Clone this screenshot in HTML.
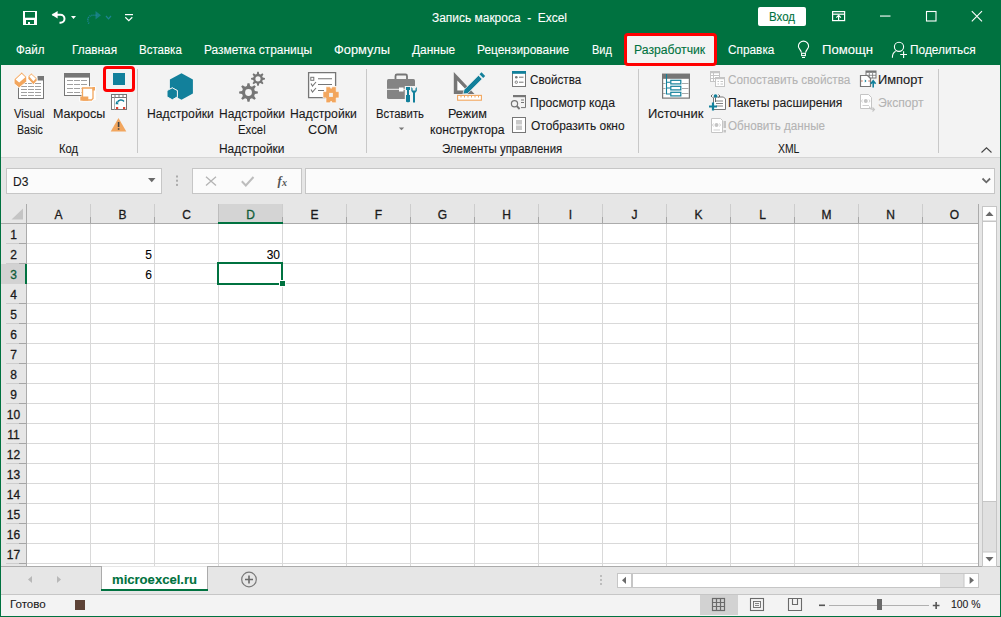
<!DOCTYPE html>
<html><head><meta charset="utf-8"><style>
html,body{margin:0;padding:0;width:1001px;height:617px;overflow:hidden;background:#fff}
body{position:relative;font-family:"Liberation Sans",sans-serif}
.t{position:absolute;white-space:pre;line-height:1;transform-origin:0 0;-webkit-text-stroke:0.1px currentColor}
.h{-webkit-text-stroke:0.3px currentColor}
</style></head><body>
<div style="position:absolute;left:0px;top:0px;width:1001px;height:65px;background:#007240"></div>
<div style="position:absolute;left:1px;top:65px;width:999px;height:92px;background:#F3F3F3"></div>
<div style="position:absolute;left:1px;top:157px;width:999px;height:1px;background:#D5D5D5"></div>
<div style="position:absolute;left:1px;top:158px;width:999px;height:408px;background:#E6E6E6"></div>
<div style="position:absolute;left:0px;top:0px;width:1px;height:617px;background:#007240"></div>
<div style="position:absolute;left:1000px;top:0px;width:1px;height:617px;background:#007240"></div>
<div style="position:absolute;left:758px;top:7px;width:48px;height:19px;background:#FFFFFF;border-radius:2px"></div>
<div style="position:absolute;left:624px;top:33px;width:93px;height:33px;border:3px solid #FF0000;border-radius:4px;box-sizing:border-box;background:#F3F3F3"></div>
<div style="position:absolute;left:137px;top:69px;width:1px;height:84px;background:#C8C8C8"></div>
<div style="position:absolute;left:366px;top:69px;width:1px;height:84px;background:#C8C8C8"></div>
<div style="position:absolute;left:638px;top:69px;width:1px;height:84px;background:#C8C8C8"></div>
<div style="position:absolute;left:938px;top:69px;width:1px;height:84px;background:#C8C8C8"></div>
<div style="position:absolute;left:103px;top:66px;width:32px;height:26px;border:3px solid #FF0000;border-radius:4px;box-sizing:border-box"></div>
<div style="position:absolute;left:113px;top:73px;width:12px;height:12px;background:#13809B"></div>
<svg style="position:absolute;left:0;top:0" width="1001" height="617" viewBox="0 0 1001 617"><rect x="23" y="11" width="14" height="14" fill="#FFFFFF"/>
<rect x="25" y="12" width="10" height="5.7" fill="#007240"/>
<rect x="26" y="20" width="8" height="4" fill="#007240"/>
<rect x="28" y="22" width="2" height="2" fill="#FFFFFF"/>
<path d="M52.5 14.8 H60.5 A4 4 0 0 1 60.5 22.8 H59.5" fill="none" stroke="#FFFFFF" stroke-width="2"/>
<path d="M51.6 14.8 L57.6 11 L57.6 18.6 Z" fill="#FFFFFF"/>
<path d="M71 16 H76 L73.5 19 Z" fill="#FFFFFF"/>
<path d="M89 23.5 C86.5 19.5 88 15.8 92.5 15.3 H97" fill="none" stroke="#2A8CB5" stroke-width="1.6" stroke-dasharray="1 1" opacity="0.75"/>
<path d="M101 15.3 L95.5 11 L95.5 19.6 Z" fill="#2A8CB5" opacity="0.55"/>
<path d="M106 16 L108.5 18.8 L111 16" fill="none" stroke="#2A8CB5" stroke-width="1.2" opacity="0.7"/>
<rect x="125" y="14" width="8" height="1.2" fill="#FFFFFF"/>
<path d="M125.3 17.3 L128.8 20.6 L132.3 17.3" fill="none" stroke="#FFFFFF" stroke-width="1.2"/>
<rect x="832.6" y="11.6" width="12" height="9" fill="none" stroke="#FFFFFF" stroke-width="1.2"/>
<rect x="833" y="13.6" width="11" height="1.2" fill="#FFFFFF"/>
<rect x="838" y="15.5" width="1.2" height="5.5" fill="#FFFFFF"/>
<path d="M836.3 17.6 L838.6 15.3 L840.9 17.6" fill="none" stroke="#FFFFFF" stroke-width="1.1"/>
<rect x="880" y="15.5" width="10.5" height="1.1" fill="#FFFFFF"/>
<rect x="926.5" y="11.5" width="9.5" height="9.5" fill="none" stroke="#FFFFFF" stroke-width="1.1"/>
<path d="M971.8 11.2 L982 21.4 M982 11.2 L971.8 21.4" stroke="#FFFFFF" stroke-width="1.1"/>
<path d="M801.4 52.6 C801 50 798.4 48.6 798.4 46.2 A5.1 5.1 0 0 1 808.6 46.2 C808.6 48.6 806 50 805.6 52.6" fill="none" stroke="#FFFFFF" stroke-width="1.1"/>
<rect x="801.6" y="53.3" width="3.8" height="2.3" fill="none" stroke="#FFFFFF" stroke-width="1.1"/>
<rect x="802" y="57" width="3" height="1" fill="#FFFFFF"/>
<circle cx="899" cy="46.8" r="4.6" fill="none" stroke="#FFFFFF" stroke-width="1.1"/>
<path d="M895.6 51.2 C893.5 52.3 892.3 54.8 892.4 57.8" fill="none" stroke="#FFFFFF" stroke-width="1.1"/>
<path d="M900.2 54.5 H907 M903.6 51.2 V58" stroke="#FFFFFF" stroke-width="1.1"/>
<rect x="18.5" y="76.5" width="25" height="22" fill="#FFFFFF" stroke="#767676" stroke-width="1"/>
<rect x="37.5" y="76.5" width="6" height="4" fill="#767676"/>
<rect x="21" y="83.0" width="6" height="1" fill="#A0A0A0"/>
<rect x="28" y="83.0" width="6" height="1" fill="#A0A0A0"/>
<rect x="35" y="83.0" width="6" height="1" fill="#A0A0A0"/>
<rect x="21" y="86.0" width="6" height="1" fill="#A0A0A0"/>
<rect x="28" y="86.0" width="6" height="1" fill="#A0A0A0"/>
<rect x="35" y="86.0" width="6" height="1" fill="#A0A0A0"/>
<rect x="21" y="89.0" width="6" height="1" fill="#A0A0A0"/>
<rect x="28" y="89.0" width="6" height="1" fill="#A0A0A0"/>
<rect x="35" y="89.0" width="6" height="1" fill="#A0A0A0"/>
<rect x="21" y="92.0" width="6" height="1" fill="#A0A0A0"/>
<rect x="28" y="92.0" width="6" height="1" fill="#A0A0A0"/>
<rect x="35" y="92.0" width="6" height="1" fill="#A0A0A0"/>
<rect x="21" y="95.0" width="6" height="1" fill="#A0A0A0"/>
<rect x="28" y="95.0" width="6" height="1" fill="#A0A0A0"/>
<rect x="35" y="95.0" width="6" height="1" fill="#A0A0A0"/>
<path d="M18.5 76.5 H37.5" stroke="#FFFFFF" stroke-width="1.2"/>
<path d="M14.1 79.2 L21.7 72.1 L26.7 77 V81.6 L19.1 87.8 L14.1 83.6 Z" fill="#F2A65E" stroke="#FFFFFF" stroke-width="0.8"/>
<path d="M15.6 79.4 L21.7 73.7 L25.4 77.3 L19.2 82.4 Z" fill="#FFFFFF"/>
<path d="M28 76.3 L31.4 73.1 L37 78.3 V80.7 L33.4 84.7 L28 78.9 Z" fill="#F2A65E" stroke="#FFFFFF" stroke-width="0.8"/>
<path d="M29.3 76.6 L31.4 74.6 L35.8 78.5 L33.4 81.3 Z" fill="#FFFFFF"/>
<rect x="64.5" y="73.5" width="25" height="22" fill="#FFFFFF" stroke="#767676" stroke-width="1"/>
<rect x="64" y="73" width="26" height="4.6" fill="#767676"/>
<rect x="67" y="80.0" width="6" height="1" fill="#A0A0A0"/>
<rect x="74" y="80.0" width="6" height="1" fill="#A0A0A0"/>
<rect x="81" y="80.0" width="6" height="1" fill="#A0A0A0"/>
<rect x="67" y="84.0" width="6" height="1" fill="#A0A0A0"/>
<rect x="74" y="84.0" width="6" height="1" fill="#A0A0A0"/>
<rect x="81" y="84.0" width="6" height="1" fill="#A0A0A0"/>
<rect x="67" y="88.0" width="6" height="1" fill="#A0A0A0"/>
<rect x="74" y="88.0" width="6" height="1" fill="#A0A0A0"/>
<rect x="81" y="88.0" width="6" height="1" fill="#A0A0A0"/>
<rect x="67" y="92.0" width="6" height="1" fill="#A0A0A0"/>
<rect x="74" y="92.0" width="6" height="1" fill="#A0A0A0"/>
<rect x="81" y="92.0" width="6" height="1" fill="#A0A0A0"/>
<path d="M81.5 86.3 H95.8 V100 H93 V101.6 H79.3 V97 H81.5 Z" fill="#FFFFFF"/>
<path d="M82.5 99.5 V88 H93 V98.5 L91.5 100 H82.5" fill="none" stroke="#F2A65E" stroke-width="1.3"/>
<rect x="80.3" y="96.5" width="8" height="4.2" fill="#F2A65E"/>
<rect x="92.5" y="87" width="2.5" height="3.5" fill="#F2A65E"/>
<rect x="111.5" y="94.5" width="15" height="15" fill="#FFFFFF" stroke="#767676" stroke-width="1"/>
<path d="M111.5 97.5 H126.5 M119 94.5 V97.5 M123 94.5 V97.5 M115 94.5 V97.5" stroke="#767676" stroke-width="1"/>
<path d="M114.5 97.5 V109.5" stroke="#B0B0B0" stroke-width="1"/>
<path d="M117.5 102.5 A3.5 3 0 0 1 124 101.5" fill="none" stroke="#12809B" stroke-width="1.4"/>
<path d="M116.2 101 L118.8 104.2 L115.6 104.2 Z" fill="#12809B"/>
<rect x="116" y="107" width="2.2" height="2.2" fill="#E04030"/><rect x="123" y="107" width="2.2" height="2.2" fill="#E04030"/>
<path d="M118.5 118 L126.3 131.6 H110.7 Z" fill="#F2A65E"/>
<rect x="117.8" y="122" width="1.6" height="5" fill="#444"/><rect x="117.8" y="128.2" width="1.6" height="1.6" fill="#444"/>
<path d="M181.5 73.2 L192.9 79.5 V93.5 L181.5 99.8 L177.8 97.8 V90.5 L172.3 87.5 L169.9 88.7 V79.5 Z" fill="#12809B"/>
<path d="M172.3 87.8 L177.4 90.6 V96.8 L172.3 99.8 L167 96.8 V90.6 Z" fill="#12809B" stroke="#F3F3F3" stroke-width="1"/>
<path d="M254.90 90.90 L257.85 91.49 L257.85 93.51 L254.90 94.10 L254.16 95.89 L255.82 98.39 L254.39 99.82 L251.89 98.16 L250.10 98.90 L249.51 101.85 L247.49 101.85 L246.90 98.90 L245.11 98.16 L242.61 99.82 L241.18 98.39 L242.84 95.89 L242.10 94.10 L239.15 93.51 L239.15 91.49 L242.10 90.90 L242.84 89.11 L241.18 86.61 L242.61 85.18 L245.11 86.84 L246.90 86.10 L247.49 83.15 L249.51 83.15 L250.10 86.10 L251.89 86.84 L254.39 85.18 L255.82 86.61 L254.16 89.11 Z M251.9 92.5 A3.4 3.4 0 1 0 245.1 92.5 A3.4 3.4 0 1 0 251.9 92.5 Z" fill="#767676" fill-rule="evenodd"/>
<path d="M262.75 77.61 L264.96 78.05 L264.96 79.55 L262.75 79.99 L262.20 81.32 L263.45 83.19 L262.39 84.25 L260.52 83.00 L259.19 83.55 L258.75 85.76 L257.25 85.76 L256.81 83.55 L255.48 83.00 L253.61 84.25 L252.55 83.19 L253.80 81.32 L253.25 79.99 L251.04 79.55 L251.04 78.05 L253.25 77.61 L253.80 76.28 L252.55 74.41 L253.61 73.35 L255.48 74.60 L256.81 74.05 L257.25 71.84 L258.75 71.84 L259.19 74.05 L260.52 74.60 L262.39 73.35 L263.45 74.41 L262.20 76.28 Z M260.6 78.8 A2.6 2.6 0 1 0 255.4 78.8 A2.6 2.6 0 1 0 260.6 78.8 Z" fill="#767676" fill-rule="evenodd"/>
<path d="M327 97.6 H308.6 V72.6 H335.6 V86" fill="#FFFFFF" stroke="#767676" stroke-width="1.3"/>
<rect x="310.8" y="77.3" width="3" height="3" fill="none" stroke="#767676" stroke-width="1"/>
<path d="M318 78.8 H332 M318 84.5 H332 M318 90.5 H324" stroke="#767676" stroke-width="1.1"/>
<path d="M311 83.5 L312.5 86 L316 82 M311 89.5 L312.5 92 L316 88" fill="none" stroke="#767676" stroke-width="1.1"/>
<path d="M326 86.8 H330 L331.1 88.6 L332.2 86.8 H336.2 V91.6 H339 V97.9 H336.2 V102.8 H332.2 L331.1 101 L330 102.8 H326 V97.9 H323 V91.6 H326 Z" fill="#F2A65E" stroke="#FFFFFF" stroke-width="0.6"/>
<rect x="329.1" y="92.9" width="3.8" height="4" fill="#F3F3F3"/>
<rect x="395.5" y="74.5" width="11.5" height="6" rx="1.5" fill="none" stroke="#767676" stroke-width="1.8"/>
<rect x="387" y="79" width="28" height="20" rx="1.5" fill="#848484"/>
<rect x="387" y="88.8" width="28" height="1" fill="#F3F3F3"/>
<rect x="399" y="87.5" width="4.5" height="4" fill="#FFFFFF"/>
<path d="M404.8 86 H411 V103 H404.8 Z M410.5 86 H418 V103 H410.5 Z" fill="#F3F3F3"/>
<path d="M406 87 H410 V90 H409 V95 H410 V101.5 C410 102.5 406 102.5 406 101.5 V95 H407 V90 H406 Z" fill="#12809B"/>
<path d="M411.3 87 V91 L413 93 V102.5 H415 V93 L416.8 91 V87 L415.5 88.5 V90.5 H412.6 V88.5 Z" fill="#12809B"/>
<path d="M457.3 80.5 V90.5 H466.8 Z" fill="#FFFFFF"/>
<path d="M453.8 72 L474.5 93.9 H453.8 Z M457.3 80.5 V90.5 H466.8 Z" fill="#767676" fill-rule="evenodd"/>
<path d="M463 94 L464 89.8 L478.5 75.3 L482.2 79 L467.7 93.5 Z" fill="#12809B" stroke="#F3F3F3" stroke-width="0.8"/>
<path d="M479.5 74.3 L481.5 72.3 L485.2 76 L483.2 78 Z" fill="#12809B"/>
<rect x="457.6" y="95.4" width="23.8" height="4.8" fill="#FFFFFF" stroke="#F2A65E" stroke-width="1.1"/>
<path d="M461 95.5 V97.5 M464.5 95.5 V97.5 M468 95.5 V97.5 M471.5 95.5 V97.5 M475 95.5 V97.5 M478.5 95.5 V97.5" stroke="#F2A65E" stroke-width="1"/>
<rect x="512.5" y="71.5" width="13" height="15" fill="#FFFFFF" stroke="#767676" stroke-width="1"/>
<rect x="512" y="71" width="14" height="2.8" fill="#12809B"/>
<circle cx="516.3" cy="77.2" r="1.3" fill="#767676"/><circle cx="516.3" cy="82.2" r="1.2" fill="none" stroke="#767676" stroke-width="0.9"/>
<path d="M519 77.2 H523.5 M519 82.2 H523.5" stroke="#767676" stroke-width="1"/>
<rect x="513" y="95" width="13" height="2.2" fill="#767676"/>
<path d="M525.5 97 V107.6 H521" fill="none" stroke="#767676" stroke-width="1"/>
<path d="M521 100 H524 M521 102.5 H524" stroke="#767676" stroke-width="1"/>
<circle cx="514.5" cy="103.8" r="3.1" fill="#F3F3F3" stroke="#767676" stroke-width="1.2"/>
<path d="M516.7 106 L519.6 109" stroke="#767676" stroke-width="1.8"/>
<rect x="512.5" y="117.5" width="13" height="15" fill="#FFFFFF" stroke="#767676" stroke-width="1"/>
<rect x="516" y="120" width="6" height="10" fill="#C9C9C9"/>
<rect x="516" y="124.5" width="6" height="1" fill="#FFFFFF"/>
<rect x="662.6" y="74.3" width="26.8" height="23.8" fill="#FFFFFF" stroke="#767676" stroke-width="1.2"/>
<rect x="662" y="73.8" width="28" height="5" fill="#767676"/>
<rect x="663" y="83.0" width="2.5" height="1" fill="#A8A8A8"/><rect x="682" y="83.0" width="6.5" height="1" fill="#A8A8A8"/>
<rect x="663" y="88.0" width="2.5" height="1" fill="#A8A8A8"/><rect x="682" y="88.0" width="6.5" height="1" fill="#A8A8A8"/>
<rect x="663" y="93.0" width="2.5" height="1" fill="#A8A8A8"/><rect x="682" y="93.0" width="6.5" height="1" fill="#A8A8A8"/>
<path d="M666.5 74 V94 H670.5 M666.5 82.2 H670.5 M666.5 88 H670.5" fill="none" stroke="#12809B" stroke-width="1.1"/>
<rect x="670.8" y="80.3" width="10" height="3.6" fill="#FFFFFF" stroke="#12809B" stroke-width="1.2"/>
<rect x="670.8" y="86.3" width="10" height="3.6" fill="#FFFFFF" stroke="#12809B" stroke-width="1.2"/>
<rect x="670.8" y="92.3" width="10" height="3.6" fill="#FFFFFF" stroke="#12809B" stroke-width="1.2"/>
<rect x="710.5" y="71.5" width="9" height="10" fill="#FFFFFF" stroke="#C5C5C5" stroke-width="1"/>
<rect x="710" y="71" width="10" height="2.3" fill="#C5C5C5"/>
<path d="M710.5 75.5 H719.5 M710.5 78.5 H715 M713.5 73 V81.5" stroke="#C5C5C5" stroke-width="1"/>
<rect x="715.5" y="77.5" width="9" height="9" fill="#FFFFFF" stroke="#C5C5C5" stroke-width="1"/>
<rect x="715" y="77" width="10" height="2.2" fill="#C5C5C5"/>
<path d="M717.5 81.5 H719 M720.5 81.5 H723 M717.5 84 H719 M720.5 84 H723" stroke="#C5C5C5" stroke-width="1"/>
<path d="M713.5 97.5 V109.5 H725.5 V99 L723.5 97 H713.5" fill="#FFFFFF" stroke="#767676" stroke-width="1"/>
<path d="M716 101 H723 M716 103.5 H723 M716 106 H723" stroke="#767676" stroke-width="0.9"/>
<circle cx="715.5" cy="96" r="1.8" fill="#12809B"/>
<path d="M712.5 94.5 L711 96 L712.5 97.5 M718.5 94.5 L720 96 L718.5 97.5" fill="none" stroke="#444" stroke-width="0.8"/>
<path d="M715.5 98 V102" stroke="#444" stroke-width="0.8"/>
<path d="M709 106.5 H717 M713 102.5 V110.5" stroke="#12809B" stroke-width="2.2"/>
<path d="M711.5 118.5 V132.5 H722.5 V120.5 L720.5 118.5 Z" fill="#FFFFFF" stroke="#C5C5C5" stroke-width="1"/>
<circle cx="716.5" cy="125" r="2" fill="#C5C5C5"/>
<path d="M713.5 123.5 L712.5 125 L713.5 126.5 M719.5 123.5 L720.5 125 L719.5 126.5 M713.5 130 H720" fill="none" stroke="#C5C5C5" stroke-width="0.8"/>
<rect x="723.5" y="121" width="2.5" height="7" fill="#C5C5C5"/><rect x="723.5" y="130" width="2.5" height="2.5" fill="#C5C5C5"/>
<rect x="866" y="71" width="10" height="7" fill="#FFFFFF" stroke="#767676" stroke-width="1"/>
<rect x="866" y="71" width="10" height="1.8" fill="#767676"/>
<path d="M869.3 73 V78 M872.6 73 V78 M866 75.3 H876" stroke="#767676" stroke-width="0.8"/>
<path d="M860.5 75.5 V86.5 H870.5 V78.5 L867.5 75.5 Z" fill="#FFFFFF" stroke="#767676" stroke-width="1.2"/>
<path d="M862.2 80.2 L861.5 81 L862.2 81.8 M868.8 80.2 L869.5 81 L868.8 81.8" fill="none" stroke="#B04020" stroke-width="0.8"/>
<path d="M864.8 79.5 V82.5 L866.5 81 Z" fill="#12809B"/>
<path d="M873.2 87.5 V81.5 M870.8 83.8 L873.2 80.8 L875.6 83.8" fill="none" stroke="#12809B" stroke-width="1.6"/>
<path d="M860.5 94.5 V108.5 H871.5 V97.5 L868.5 94.5 Z" fill="#FFFFFF" stroke="#C5C5C5" stroke-width="1"/>
<circle cx="865.8" cy="101" r="2" fill="#C5C5C5"/>
<path d="M862.5 99.5 L861.5 101 L862.5 102.5 M869 99.5 L870 101 L869 102.5 M862.5 105.5 H869" fill="none" stroke="#C5C5C5" stroke-width="0.8"/>
<path d="M869.5 106.5 C869.5 109 871 109.5 874 109.5 M872.5 107.5 L874.5 109.5 L872.5 111.5" fill="none" stroke="#C5C5C5" stroke-width="1.1"/>
<path d="M981.5 152.5 L986.5 147.8 L991.5 152.5" fill="none" stroke="#444" stroke-width="1.1"/></svg>
<div style="position:absolute;left:6px;top:168px;width:156px;height:26px;background:#FBFBFB;border:1px solid #C6C6C6;box-sizing:border-box"></div>
<div style="position:absolute;left:192px;top:168px;width:110px;height:26px;background:#FBFBFB;border:1px solid #C6C6C6;box-sizing:border-box"></div>
<div style="position:absolute;left:305px;top:168px;width:690px;height:26px;background:#FBFBFB;border:1px solid #C6C6C6;box-sizing:border-box"></div>
<div style="position:absolute;left:1px;top:204px;width:977px;height:20px;background:#E6E6E6"></div>
<div style="position:absolute;left:1px;top:224px;width:25px;height:342px;background:#E6E6E6"></div>
<div style="position:absolute;left:27px;top:224px;width:951px;height:342px;background:#FFFFFF"></div>
<div style="position:absolute;left:90px;top:224px;width:1px;height:342px;background:#D9D9D9"></div>
<div style="position:absolute;left:154px;top:224px;width:1px;height:342px;background:#D9D9D9"></div>
<div style="position:absolute;left:218px;top:224px;width:1px;height:342px;background:#D9D9D9"></div>
<div style="position:absolute;left:282px;top:224px;width:1px;height:342px;background:#D9D9D9"></div>
<div style="position:absolute;left:346px;top:224px;width:1px;height:342px;background:#D9D9D9"></div>
<div style="position:absolute;left:410px;top:224px;width:1px;height:342px;background:#D9D9D9"></div>
<div style="position:absolute;left:474px;top:224px;width:1px;height:342px;background:#D9D9D9"></div>
<div style="position:absolute;left:538px;top:224px;width:1px;height:342px;background:#D9D9D9"></div>
<div style="position:absolute;left:602px;top:224px;width:1px;height:342px;background:#D9D9D9"></div>
<div style="position:absolute;left:666px;top:224px;width:1px;height:342px;background:#D9D9D9"></div>
<div style="position:absolute;left:730px;top:224px;width:1px;height:342px;background:#D9D9D9"></div>
<div style="position:absolute;left:794px;top:224px;width:1px;height:342px;background:#D9D9D9"></div>
<div style="position:absolute;left:858px;top:224px;width:1px;height:342px;background:#D9D9D9"></div>
<div style="position:absolute;left:922px;top:224px;width:1px;height:342px;background:#D9D9D9"></div>
<div style="position:absolute;left:27px;top:243px;width:951px;height:1px;background:#D9D9D9"></div>
<div style="position:absolute;left:27px;top:263px;width:951px;height:1px;background:#D9D9D9"></div>
<div style="position:absolute;left:27px;top:283px;width:951px;height:1px;background:#D9D9D9"></div>
<div style="position:absolute;left:27px;top:303px;width:951px;height:1px;background:#D9D9D9"></div>
<div style="position:absolute;left:27px;top:323px;width:951px;height:1px;background:#D9D9D9"></div>
<div style="position:absolute;left:27px;top:343px;width:951px;height:1px;background:#D9D9D9"></div>
<div style="position:absolute;left:27px;top:363px;width:951px;height:1px;background:#D9D9D9"></div>
<div style="position:absolute;left:27px;top:383px;width:951px;height:1px;background:#D9D9D9"></div>
<div style="position:absolute;left:27px;top:403px;width:951px;height:1px;background:#D9D9D9"></div>
<div style="position:absolute;left:27px;top:423px;width:951px;height:1px;background:#D9D9D9"></div>
<div style="position:absolute;left:27px;top:443px;width:951px;height:1px;background:#D9D9D9"></div>
<div style="position:absolute;left:27px;top:463px;width:951px;height:1px;background:#D9D9D9"></div>
<div style="position:absolute;left:27px;top:483px;width:951px;height:1px;background:#D9D9D9"></div>
<div style="position:absolute;left:27px;top:503px;width:951px;height:1px;background:#D9D9D9"></div>
<div style="position:absolute;left:27px;top:523px;width:951px;height:1px;background:#D9D9D9"></div>
<div style="position:absolute;left:27px;top:543px;width:951px;height:1px;background:#D9D9D9"></div>
<div style="position:absolute;left:27px;top:563px;width:951px;height:1px;background:#D9D9D9"></div>
<div style="position:absolute;left:26px;top:204px;width:1px;height:20px;background:#CDCDCD"></div>
<div style="position:absolute;left:26px;top:217px;width:1px;height:7px;background:#A6A6A6"></div>
<div style="position:absolute;left:90px;top:204px;width:1px;height:20px;background:#CDCDCD"></div>
<div style="position:absolute;left:90px;top:217px;width:1px;height:7px;background:#A6A6A6"></div>
<div style="position:absolute;left:154px;top:204px;width:1px;height:20px;background:#CDCDCD"></div>
<div style="position:absolute;left:154px;top:217px;width:1px;height:7px;background:#A6A6A6"></div>
<div style="position:absolute;left:218px;top:204px;width:1px;height:20px;background:#CDCDCD"></div>
<div style="position:absolute;left:218px;top:217px;width:1px;height:7px;background:#A6A6A6"></div>
<div style="position:absolute;left:282px;top:204px;width:1px;height:20px;background:#CDCDCD"></div>
<div style="position:absolute;left:282px;top:217px;width:1px;height:7px;background:#A6A6A6"></div>
<div style="position:absolute;left:346px;top:204px;width:1px;height:20px;background:#CDCDCD"></div>
<div style="position:absolute;left:346px;top:217px;width:1px;height:7px;background:#A6A6A6"></div>
<div style="position:absolute;left:410px;top:204px;width:1px;height:20px;background:#CDCDCD"></div>
<div style="position:absolute;left:410px;top:217px;width:1px;height:7px;background:#A6A6A6"></div>
<div style="position:absolute;left:474px;top:204px;width:1px;height:20px;background:#CDCDCD"></div>
<div style="position:absolute;left:474px;top:217px;width:1px;height:7px;background:#A6A6A6"></div>
<div style="position:absolute;left:538px;top:204px;width:1px;height:20px;background:#CDCDCD"></div>
<div style="position:absolute;left:538px;top:217px;width:1px;height:7px;background:#A6A6A6"></div>
<div style="position:absolute;left:602px;top:204px;width:1px;height:20px;background:#CDCDCD"></div>
<div style="position:absolute;left:602px;top:217px;width:1px;height:7px;background:#A6A6A6"></div>
<div style="position:absolute;left:666px;top:204px;width:1px;height:20px;background:#CDCDCD"></div>
<div style="position:absolute;left:666px;top:217px;width:1px;height:7px;background:#A6A6A6"></div>
<div style="position:absolute;left:730px;top:204px;width:1px;height:20px;background:#CDCDCD"></div>
<div style="position:absolute;left:730px;top:217px;width:1px;height:7px;background:#A6A6A6"></div>
<div style="position:absolute;left:794px;top:204px;width:1px;height:20px;background:#CDCDCD"></div>
<div style="position:absolute;left:794px;top:217px;width:1px;height:7px;background:#A6A6A6"></div>
<div style="position:absolute;left:858px;top:204px;width:1px;height:20px;background:#CDCDCD"></div>
<div style="position:absolute;left:858px;top:217px;width:1px;height:7px;background:#A6A6A6"></div>
<div style="position:absolute;left:922px;top:204px;width:1px;height:20px;background:#CDCDCD"></div>
<div style="position:absolute;left:922px;top:217px;width:1px;height:7px;background:#A6A6A6"></div>
<div style="position:absolute;left:6px;top:223px;width:20px;height:1px;background:#CDCDCD"></div>
<div style="position:absolute;left:19px;top:223px;width:7px;height:1px;background:#A6A6A6"></div>
<div style="position:absolute;left:6px;top:243px;width:20px;height:1px;background:#CDCDCD"></div>
<div style="position:absolute;left:19px;top:243px;width:7px;height:1px;background:#A6A6A6"></div>
<div style="position:absolute;left:6px;top:263px;width:20px;height:1px;background:#CDCDCD"></div>
<div style="position:absolute;left:19px;top:263px;width:7px;height:1px;background:#A6A6A6"></div>
<div style="position:absolute;left:6px;top:283px;width:20px;height:1px;background:#CDCDCD"></div>
<div style="position:absolute;left:19px;top:283px;width:7px;height:1px;background:#A6A6A6"></div>
<div style="position:absolute;left:6px;top:303px;width:20px;height:1px;background:#CDCDCD"></div>
<div style="position:absolute;left:19px;top:303px;width:7px;height:1px;background:#A6A6A6"></div>
<div style="position:absolute;left:6px;top:323px;width:20px;height:1px;background:#CDCDCD"></div>
<div style="position:absolute;left:19px;top:323px;width:7px;height:1px;background:#A6A6A6"></div>
<div style="position:absolute;left:6px;top:343px;width:20px;height:1px;background:#CDCDCD"></div>
<div style="position:absolute;left:19px;top:343px;width:7px;height:1px;background:#A6A6A6"></div>
<div style="position:absolute;left:6px;top:363px;width:20px;height:1px;background:#CDCDCD"></div>
<div style="position:absolute;left:19px;top:363px;width:7px;height:1px;background:#A6A6A6"></div>
<div style="position:absolute;left:6px;top:383px;width:20px;height:1px;background:#CDCDCD"></div>
<div style="position:absolute;left:19px;top:383px;width:7px;height:1px;background:#A6A6A6"></div>
<div style="position:absolute;left:6px;top:403px;width:20px;height:1px;background:#CDCDCD"></div>
<div style="position:absolute;left:19px;top:403px;width:7px;height:1px;background:#A6A6A6"></div>
<div style="position:absolute;left:6px;top:423px;width:20px;height:1px;background:#CDCDCD"></div>
<div style="position:absolute;left:19px;top:423px;width:7px;height:1px;background:#A6A6A6"></div>
<div style="position:absolute;left:6px;top:443px;width:20px;height:1px;background:#CDCDCD"></div>
<div style="position:absolute;left:19px;top:443px;width:7px;height:1px;background:#A6A6A6"></div>
<div style="position:absolute;left:6px;top:463px;width:20px;height:1px;background:#CDCDCD"></div>
<div style="position:absolute;left:19px;top:463px;width:7px;height:1px;background:#A6A6A6"></div>
<div style="position:absolute;left:6px;top:483px;width:20px;height:1px;background:#CDCDCD"></div>
<div style="position:absolute;left:19px;top:483px;width:7px;height:1px;background:#A6A6A6"></div>
<div style="position:absolute;left:6px;top:503px;width:20px;height:1px;background:#CDCDCD"></div>
<div style="position:absolute;left:19px;top:503px;width:7px;height:1px;background:#A6A6A6"></div>
<div style="position:absolute;left:6px;top:523px;width:20px;height:1px;background:#CDCDCD"></div>
<div style="position:absolute;left:19px;top:523px;width:7px;height:1px;background:#A6A6A6"></div>
<div style="position:absolute;left:6px;top:543px;width:20px;height:1px;background:#CDCDCD"></div>
<div style="position:absolute;left:19px;top:543px;width:7px;height:1px;background:#A6A6A6"></div>
<div style="position:absolute;left:6px;top:563px;width:20px;height:1px;background:#CDCDCD"></div>
<div style="position:absolute;left:19px;top:563px;width:7px;height:1px;background:#A6A6A6"></div>
<div style="position:absolute;left:1px;top:223px;width:977px;height:1px;background:#ABABAB"></div>
<div style="position:absolute;left:26px;top:204px;width:1px;height:362px;background:#ABABAB"></div>
<div style="position:absolute;left:978px;top:204px;width:1px;height:362px;background:#ABABAB"></div>
<div style="position:absolute;left:218px;top:204px;width:64px;height:18px;background:#D4D4D4"></div>
<div style="position:absolute;left:218px;top:204px;width:1px;height:18px;background:#BDBDBD"></div>
<div style="position:absolute;left:218px;top:222px;width:65px;height:2px;background:#007240"></div>
<div style="position:absolute;left:1px;top:264px;width:24px;height:20px;background:#D2D2D2"></div>
<div style="position:absolute;left:25px;top:264px;width:2px;height:20px;background:#007240"></div>
<div style="position:absolute;left:217px;top:262px;width:66px;height:23px;border:2px solid #007240;box-sizing:border-box"></div>
<div style="position:absolute;left:280px;top:281px;width:5px;height:5px;background:#007240;outline:1px solid #fff"></div>
<div class="t h" style="left:38.5px;width:40px;text-align:center;top:208.8px;font-size:12px;color:#1A1A1A">A</div>
<div class="t h" style="left:102.5px;width:40px;text-align:center;top:208.8px;font-size:12px;color:#1A1A1A">B</div>
<div class="t h" style="left:166.5px;width:40px;text-align:center;top:208.8px;font-size:12px;color:#1A1A1A">C</div>
<div class="t h" style="left:230.5px;width:40px;text-align:center;top:208.8px;font-size:12px;color:#105C38">D</div>
<div class="t h" style="left:294.5px;width:40px;text-align:center;top:208.8px;font-size:12px;color:#1A1A1A">E</div>
<div class="t h" style="left:358.5px;width:40px;text-align:center;top:208.8px;font-size:12px;color:#1A1A1A">F</div>
<div class="t h" style="left:422.5px;width:40px;text-align:center;top:208.8px;font-size:12px;color:#1A1A1A">G</div>
<div class="t h" style="left:486.5px;width:40px;text-align:center;top:208.8px;font-size:12px;color:#1A1A1A">H</div>
<div class="t h" style="left:550.5px;width:40px;text-align:center;top:208.8px;font-size:12px;color:#1A1A1A">I</div>
<div class="t h" style="left:614.5px;width:40px;text-align:center;top:208.8px;font-size:12px;color:#1A1A1A">J</div>
<div class="t h" style="left:678.5px;width:40px;text-align:center;top:208.8px;font-size:12px;color:#1A1A1A">K</div>
<div class="t h" style="left:742.5px;width:40px;text-align:center;top:208.8px;font-size:12px;color:#1A1A1A">L</div>
<div class="t h" style="left:806.5px;width:40px;text-align:center;top:208.8px;font-size:12px;color:#1A1A1A">M</div>
<div class="t h" style="left:870.5px;width:40px;text-align:center;top:208.8px;font-size:12px;color:#1A1A1A">N</div>
<div class="t h" style="left:934.5px;width:40px;text-align:center;top:208.8px;font-size:12px;color:#1A1A1A">O</div>
<div class="t h" style="left:1px;width:25px;text-align:center;top:228.8px;font-size:12px;color:#1A1A1A">1</div>
<div class="t h" style="left:1px;width:25px;text-align:center;top:248.8px;font-size:12px;color:#1A1A1A">2</div>
<div class="t h" style="left:1px;width:25px;text-align:center;top:268.8px;font-size:12px;color:#105C38">3</div>
<div class="t h" style="left:1px;width:25px;text-align:center;top:288.8px;font-size:12px;color:#1A1A1A">4</div>
<div class="t h" style="left:1px;width:25px;text-align:center;top:308.8px;font-size:12px;color:#1A1A1A">5</div>
<div class="t h" style="left:1px;width:25px;text-align:center;top:328.8px;font-size:12px;color:#1A1A1A">6</div>
<div class="t h" style="left:1px;width:25px;text-align:center;top:348.8px;font-size:12px;color:#1A1A1A">7</div>
<div class="t h" style="left:1px;width:25px;text-align:center;top:368.8px;font-size:12px;color:#1A1A1A">8</div>
<div class="t h" style="left:1px;width:25px;text-align:center;top:388.8px;font-size:12px;color:#1A1A1A">9</div>
<div class="t h" style="left:1px;width:25px;text-align:center;top:408.8px;font-size:12px;color:#1A1A1A">10</div>
<div class="t h" style="left:1px;width:25px;text-align:center;top:428.8px;font-size:12px;color:#1A1A1A">11</div>
<div class="t h" style="left:1px;width:25px;text-align:center;top:448.8px;font-size:12px;color:#1A1A1A">12</div>
<div class="t h" style="left:1px;width:25px;text-align:center;top:468.8px;font-size:12px;color:#1A1A1A">13</div>
<div class="t h" style="left:1px;width:25px;text-align:center;top:488.8px;font-size:12px;color:#1A1A1A">14</div>
<div class="t h" style="left:1px;width:25px;text-align:center;top:508.8px;font-size:12px;color:#1A1A1A">15</div>
<div class="t h" style="left:1px;width:25px;text-align:center;top:528.8px;font-size:12px;color:#1A1A1A">16</div>
<div class="t h" style="left:1px;width:25px;text-align:center;top:548.8px;font-size:12px;color:#1A1A1A">17</div>
<div class="t" style="left:92px;width:60px;text-align:right;top:248.8px;font-size:12px">5</div>
<div class="t" style="left:220px;width:60px;text-align:right;top:248.8px;font-size:12px">30</div>
<div class="t" style="left:92px;width:60px;text-align:right;top:268.8px;font-size:12px">6</div>
<div style="position:absolute;left:1px;top:566px;width:999px;height:28px;background:#E6E6E6"></div>
<div style="position:absolute;left:1px;top:566px;width:101px;height:1px;background:#ABABAB"></div>
<div style="position:absolute;left:208px;top:566px;width:792px;height:1px;background:#ABABAB"></div>
<div style="position:absolute;left:101px;top:566px;width:1px;height:25px;background:#ABABAB"></div>
<div style="position:absolute;left:207px;top:566px;width:1px;height:25px;background:#ABABAB"></div>
<div style="position:absolute;left:102px;top:567px;width:105px;height:22px;background:#FFFFFF"></div>
<div style="position:absolute;left:101px;top:589px;width:107px;height:2px;background:#007240"></div>
<div style="position:absolute;left:1px;top:594px;width:999px;height:1px;background:#C6C6C6"></div>
<div style="position:absolute;left:1px;top:595px;width:999px;height:21px;background:#F3F3F3"></div>
<div style="position:absolute;left:0px;top:616px;width:1001px;height:1px;background:#007240"></div>
<div style="position:absolute;left:75px;top:600px;width:10px;height:10px;background:#5E4438"></div>
<svg style="position:absolute;left:0;top:0" width="1001" height="617" viewBox="0 0 1001 617"><path d="M148 178 H155.5 L151.75 182.2 Z" fill="#6A6A6A"/>
<rect x="176" y="175.5" width="2" height="2" fill="#ABABAB"/>
<rect x="176" y="179.7" width="2" height="2" fill="#ABABAB"/>
<rect x="176" y="183.9" width="2" height="2" fill="#ABABAB"/>
<path d="M206 176.8 L216 185.4 M216 176.8 L206 185.4" stroke="#B4B4B4" stroke-width="1.3"/>
<path d="M241.8 181.3 L245.8 185.5 L253.5 177" fill="none" stroke="#BDBDBD" stroke-width="2"/>
<text x="277.5" y="185" font-family="Liberation Serif" font-style="italic" font-weight="bold" font-size="12.5" fill="#555">f</text>
<text x="282" y="186" font-family="Liberation Serif" font-style="italic" font-weight="bold" font-size="10" fill="#555">x</text>
<path d="M982.5 178.5 L986.3 182.3 L990.1 178.5" fill="none" stroke="#6A6A6A" stroke-width="1.8"/>
<path d="M23 208.6 V219.6 H11.5 Z" fill="#C4C4C4"/>
<path d="M398.8 127.5 H404.2 L401.5 130.3 Z" fill="#7A7A7A"/>
<path d="M32 576 V583 L28 579.5 Z" fill="#B8B8B8"/>
<path d="M57 576 V583 L61 579.5 Z" fill="#B8B8B8"/>
<circle cx="249" cy="579.5" r="7.3" fill="none" stroke="#7A7A7A" stroke-width="1.2"/>
<path d="M245 579.5 H253 M249 575.5 V583.5" stroke="#6A6A6A" stroke-width="1.6"/>
<rect x="600" y="575" width="2" height="2" fill="#BDBDBD"/>
<rect x="600" y="579" width="2" height="2" fill="#BDBDBD"/>
<rect x="600" y="583" width="2" height="2" fill="#BDBDBD"/>
<rect x="617.5" y="573.5" width="361" height="14" fill="#FFFFFF" stroke="#C6C6C6" stroke-width="1"/>
<rect x="631" y="574" width="2" height="13" fill="#C6C6C6"/>
<rect x="940" y="574" width="24" height="13" fill="#E0E0E0"/>
<rect x="963.5" y="574" width="1" height="13" fill="#C6C6C6"/>
<path d="M626 576.7 V584 L622 580.35 Z" fill="#6A6A6A"/>
<path d="M969.6 576.7 V584 L974 580.35 Z" fill="#6A6A6A"/>
<rect x="982.5" y="206.5" width="14" height="360" fill="#FFFFFF" stroke="#C6C6C6" stroke-width="1"/>
<rect x="983" y="220.5" width="13" height="1.5" fill="#C6C6C6"/>
<rect x="983" y="501" width="13" height="51" fill="#E0E0E0"/>
<rect x="983" y="501" width="13" height="1" fill="#C6C6C6"/>
<rect x="983" y="551.5" width="13" height="1" fill="#C6C6C6"/>
<path d="M985.5 216 H993.5 L989.5 211.5 Z" fill="#6A6A6A"/>
<path d="M985.5 557 H993.5 L989.5 561.5 Z" fill="#6A6A6A"/>
<rect x="700" y="595" width="38" height="20" fill="#D2D2D2"/>
<rect x="712.5" y="598.5" width="12" height="12" fill="none" stroke="#6A6A6A" stroke-width="1.2"/>
<path d="M716.5 598.5 V610.5 M720.5 598.5 V610.5 M712.5 602.5 H724.5 M712.5 606.5 H724.5" stroke="#6A6A6A" stroke-width="1.2"/>
<rect x="750.5" y="598.5" width="13" height="12" fill="none" stroke="#6A6A6A" stroke-width="1.1"/>
<rect x="753.5" y="601.5" width="7" height="6" fill="none" stroke="#6A6A6A" stroke-width="0.9"/>
<path d="M755 603.5 H759 M755 605.5 H759" stroke="#6A6A6A" stroke-width="0.8"/>
<path d="M788.5 610.5 V598.5 H801.5 V610.5 Z M792.5 598.5 V604.5 H797.5 V598.5" fill="none" stroke="#6A6A6A" stroke-width="1.1"/>
<rect x="819" y="604.5" width="6" height="1.6" fill="#555"/>
<rect x="829" y="605" width="100" height="1" fill="#B0B0B0"/>
<rect x="877" y="599" width="5" height="11" fill="#6A6A6A"/>
<path d="M932.8 605.5 H939.5 M936.15 602 V609" stroke="#555" stroke-width="1.6"/></svg>
<div class="t" style="left:431.98px;top:11.8px;font-size:12px;color:#FFFFFF;font-weight:400;transform:scaleX(0.9958)">Запись макроса  -  Excel</div>
<div class="t" style="left:768.96px;top:10.8px;font-size:12px;color:#007240;font-weight:400;transform:scaleX(0.9590)">Вход</div>
<div class="t" style="left:16.00px;top:43.8px;font-size:12px;color:#FFFFFF;font-weight:400;transform:scaleX(0.9656)">Файл</div>
<div class="t" style="left:71.96px;top:43.8px;font-size:12px;color:#FFFFFF;font-weight:400;transform:scaleX(0.9863)">Главная</div>
<div class="t" style="left:138.97px;top:43.8px;font-size:12px;color:#FFFFFF;font-weight:400;transform:scaleX(0.9601)">Вставка</div>
<div class="t" style="left:203.99px;top:43.8px;font-size:12px;color:#FFFFFF;font-weight:400;transform:scaleX(0.9922)">Разметка страницы</div>
<div class="t" style="left:334.17px;top:43.8px;font-size:12px;color:#FFFFFF;font-weight:400;transform:scaleX(1.0700)">Формулы</div>
<div class="t" style="left:411.80px;top:43.8px;font-size:12px;color:#FFFFFF;font-weight:400;transform:scaleX(0.9965)">Данные</div>
<div class="t" style="left:476.99px;top:43.8px;font-size:12px;color:#FFFFFF;font-weight:400;transform:scaleX(0.9929)">Рецензирование</div>
<div class="t" style="left:591.72px;top:43.8px;font-size:12px;color:#FFFFFF;font-weight:400;transform:scaleX(0.9146)">Вид</div>
<div class="t" style="left:727.58px;top:43.8px;font-size:12px;color:#FFFFFF;font-weight:400;transform:scaleX(0.9860)">Справка</div>
<div class="t" style="left:821.96px;top:43.8px;font-size:12px;color:#FFFFFF;font-weight:400;transform:scaleX(1.0931)">Помощн</div>
<div class="t" style="left:909.98px;top:43.8px;font-size:12px;color:#FFFFFF;font-weight:400;transform:scaleX(0.9904)">Поделиться</div>
<div class="t" style="left:633.98px;top:43.8px;font-size:12px;color:#007240;font-weight:400;transform:scaleX(1.0177)">Разработчик</div>
<div class="t" style="left:14.00px;top:107.8px;font-size:12px;color:#1A1A1A;font-weight:400;transform:scaleX(0.9363)">Visual</div>
<div class="t" style="left:16.70px;top:123.8px;font-size:12px;color:#1A1A1A;font-weight:400;transform:scaleX(0.8826)">Basic</div>
<div class="t" style="left:52.76px;top:107.8px;font-size:12px;color:#1A1A1A;font-weight:400;transform:scaleX(1.0445)">Макросы</div>
<div class="t" style="left:58.94px;top:143.3px;font-size:12px;color:#1A1A1A;font-weight:400;transform:scaleX(0.9340)">Код</div>
<div class="t" style="left:146.78px;top:107.8px;font-size:12px;color:#1A1A1A;font-weight:400;transform:scaleX(1.0150)">Надстройки</div>
<div class="t" style="left:218.59px;top:107.8px;font-size:12px;color:#1A1A1A;font-weight:400;transform:scaleX(0.9999)">Надстройки</div>
<div class="t" style="left:238.16px;top:123.8px;font-size:12px;color:#1A1A1A;font-weight:400;transform:scaleX(0.9432)">Excel</div>
<div class="t" style="left:289.58px;top:107.8px;font-size:12px;color:#1A1A1A;font-weight:400;transform:scaleX(1.0150)">Надстройки</div>
<div class="t" style="left:308.14px;top:123.8px;font-size:12px;color:#1A1A1A;font-weight:400;transform:scaleX(1.0543)">COM</div>
<div class="t" style="left:218.97px;top:143.3px;font-size:12px;color:#1A1A1A;font-weight:400;transform:scaleX(0.9940)">Надстройки</div>
<div class="t" style="left:376.37px;top:107.8px;font-size:12px;color:#1A1A1A;font-weight:400;transform:scaleX(0.9439)">Вставить</div>
<div class="t" style="left:447.97px;top:107.8px;font-size:12px;color:#1A1A1A;font-weight:400;transform:scaleX(1.0503)">Режим</div>
<div class="t" style="left:429.79px;top:123.8px;font-size:12px;color:#1A1A1A;font-weight:400;transform:scaleX(1.0124)">конструктора</div>
<div class="t" style="left:530.18px;top:74.3px;font-size:12px;color:#1A1A1A;font-weight:400;transform:scaleX(0.9721)">Свойства</div>
<div class="t" style="left:530.19px;top:97.3px;font-size:12px;color:#1A1A1A;font-weight:400;transform:scaleX(1.0168)">Просмотр кода</div>
<div class="t" style="left:531.20px;top:120.3px;font-size:12px;color:#1A1A1A;font-weight:400;transform:scaleX(0.9962)">Отобразить окно</div>
<div class="t" style="left:442.19px;top:143.3px;font-size:12px;color:#1A1A1A;font-weight:400;transform:scaleX(0.9514)">Элементы управления</div>
<div class="t" style="left:647.98px;top:107.8px;font-size:12px;color:#1A1A1A;font-weight:400;transform:scaleX(1.0818)">Источник</div>
<div class="t" style="left:727.98px;top:74.3px;font-size:12px;color:#B4B4B4;font-weight:400;transform:scaleX(0.9814)">Сопоставить свойства</div>
<div class="t" style="left:727.97px;top:97.3px;font-size:12px;color:#1A1A1A;font-weight:400;transform:scaleX(1.0102)">Пакеты расширения</div>
<div class="t" style="left:728.00px;top:120.3px;font-size:12px;color:#B4B4B4;font-weight:400;transform:scaleX(0.9709)">Обновить данные</div>
<div class="t" style="left:877.98px;top:74.3px;font-size:12px;color:#1A1A1A;font-weight:400;transform:scaleX(1.0732)">Импорт</div>
<div class="t" style="left:877.78px;top:97.3px;font-size:12px;color:#B4B4B4;font-weight:400;transform:scaleX(1.0116)">Экспорт</div>
<div class="t" style="left:778.00px;top:143.3px;font-size:12px;color:#1A1A1A;font-weight:400;transform:scaleX(0.8670)">XML</div>
<div class="t" style="left:13.40px;top:175.8px;font-size:12px;color:#1A1A1A;font-weight:400;transform:scaleX(1.0037)">D3</div>
<div class="t" style="left:9.70px;top:598.7px;font-size:11px;color:#1A1A1A;font-weight:400;transform:scaleX(1.0539)">Готово</div>
<div class="t" style="left:951.17px;top:598.7px;font-size:11px;color:#1A1A1A;font-weight:400;transform:scaleX(0.9494)">100 %</div>
<div class="t" style="left:111.98px;top:573.8px;font-size:12px;color:#007240;font-weight:700;transform:scaleX(1.0897)">microexcel.ru</div>
</body></html>
